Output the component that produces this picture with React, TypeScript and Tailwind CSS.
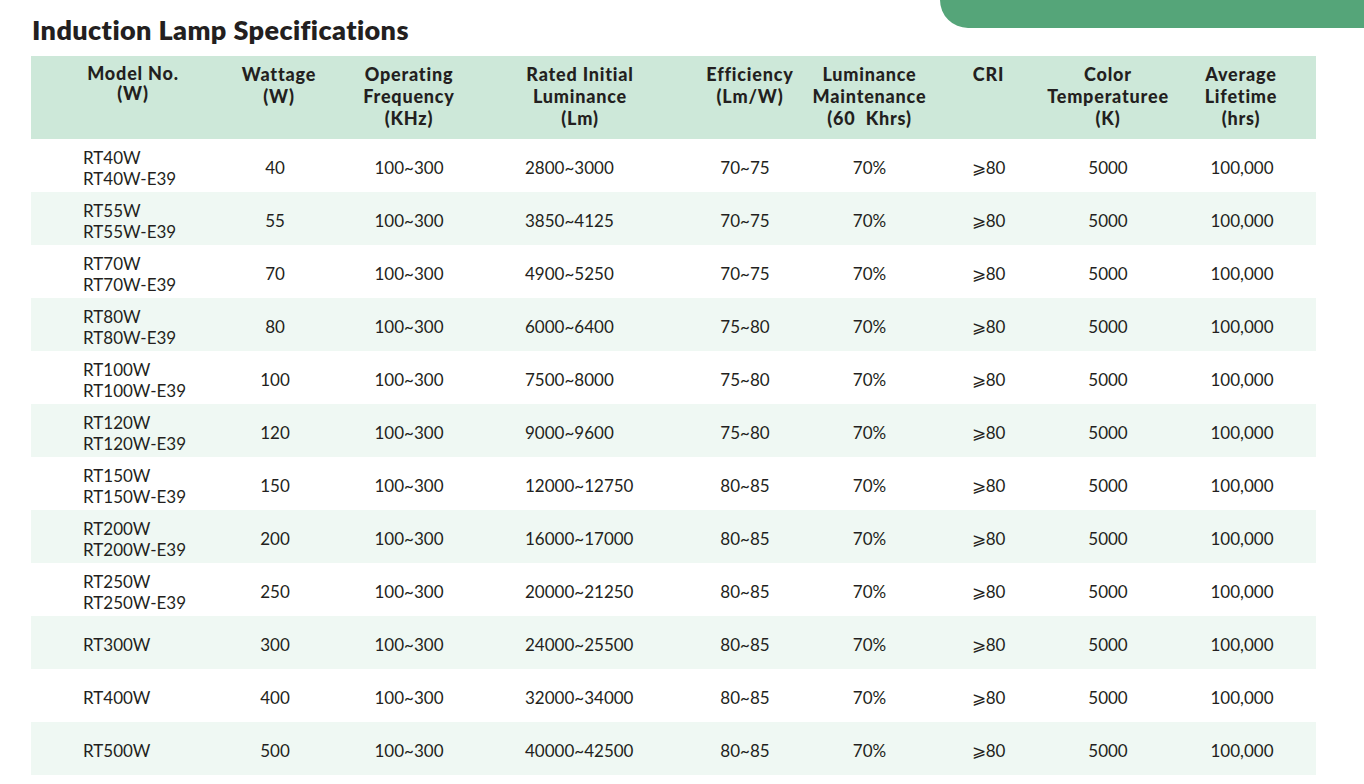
const rows = [
  { model: ['RT40W', 'RT40W-E39'], w: '40', lm: '2800~3000', eff: '70~75' },
  { model: ['RT55W', 'RT55W-E39'], w: '55', lm: '3850~4125', eff: '70~75' },
  { model: ['RT70W', 'RT70W-E39'], w: '70', lm: '4900~5250', eff: '70~75' },
  { model: ['RT80W', 'RT80W-E39'], w: '80', lm: '6000~6400', eff: '75~80' },
  { model: ['RT100W', 'RT100W-E39'], w: '100', lm: '7500~8000', eff: '75~80' },
  { model: ['RT120W', 'RT120W-E39'], w: '120', lm: '9000~9600', eff: '75~80' },
  { model: ['RT150W', 'RT150W-E39'], w: '150', lm: '12000~12750', eff: '80~85' },
  { model: ['RT200W', 'RT200W-E39'], w: '200', lm: '16000~17000', eff: '80~85' },
  { model: ['RT250W', 'RT250W-E39'], w: '250', lm: '20000~21250', eff: '80~85' },
  { model: ['RT300W'], w: '300', lm: '24000~25500', eff: '80~85' },
  { model: ['RT400W'], w: '400', lm: '32000~34000', eff: '80~85' },
  { model: ['RT500W'], w: '500', lm: '40000~42500', eff: '80~85' },
]

const cols = 'grid grid-cols-[175px_138px_151px_170px_145px_119px_119px_126px_142px]'

function HeaderCell({ lines, className = '' }: { lines: string[]; className?: string }) {
  return (
    <div className={`flex flex-col items-center pt-[7px] ${className}`}>
      {lines.map((l) => (
        <span key={l} className="whitespace-pre">{l}</span>
      ))}
    </div>
  )
}

export default function App() {
  return (
    <div className="relative h-[784px] w-[1364px] overflow-hidden bg-white text-[#231f20] [font-family:Lato,'Open_Sans',sans-serif]">
      <div className="absolute right-0 top-0 h-[28px] w-[424px] rounded-bl-[32px] bg-[#55a579]" />
      <h1 className="pl-[32px] pt-[14px] text-[27px] font-extrabold leading-[32px] tracking-[0.4px]">Induction Lamp Specifications</h1>
      <div className="ml-[31px] mt-[10px] w-[1285px]">
        <div className={`${cols} h-[83px] bg-[#cde8d9] text-[18px] font-black leading-[22px] tracking-[0.8px]`}>
          <HeaderCell lines={['Model No.', '(W)']} className="pl-[29px] leading-[20px]" />
          <HeaderCell lines={['Wattage', '(W)']} className="pl-[8px]" />
          <HeaderCell lines={['Operating', 'Frequency', '(KHz)']} className="pr-[21px]" />
          <HeaderCell lines={['Rated Initial', 'Luminance', '(Lm)']} />
          <HeaderCell lines={['Efficiency', '(Lm/W)']} className="pl-[25px]" />
          <HeaderCell lines={['Luminance', 'Maintenance', '(60  Khrs)']} />
          <HeaderCell lines={['CRI']} />
          <HeaderCell lines={['Color', 'Temperaturee', '(K)']} className="pr-[6px]" />
          <HeaderCell lines={['Average', 'Lifetime', '(hrs)']} className="pr-[8px]" />
        </div>
        {rows.map((r, i) => (
          <div
            key={r.model[0]}
            className={`${cols} h-[53px] items-center pt-[4px] text-[17px] leading-[21px] ${i % 2 === 1 ? 'bg-[#eff8f3]' : 'bg-white'}`}
          >
            <div className="flex flex-col pl-[52px]">
              {r.model.map((m) => (
                <span key={m}>{m}</span>
              ))}
            </div>
            <div className="text-center">{r.w}</div>
            <div className="pr-[21px] text-center">100~300</div>
            <div className="pl-[30px]">{r.lm}</div>
            <div className="pl-[15px] text-center">{r.eff}</div>
            <div className="text-center">70%</div>
            <div className="text-center">⩾80</div>
            <div className="pr-[6px] text-center">5000</div>
            <div className="pr-[6px] text-center">100,000</div>
          </div>
        ))}
      </div>
    </div>
  )
}
